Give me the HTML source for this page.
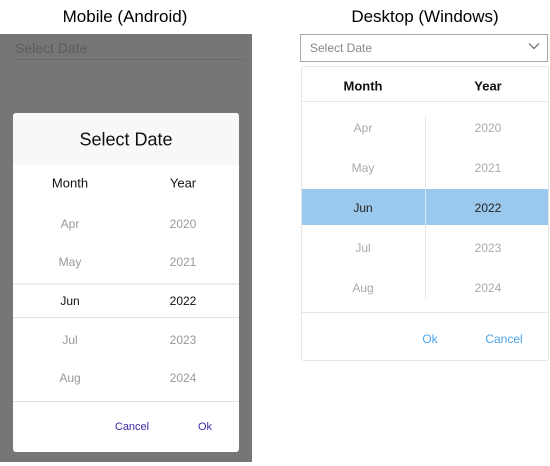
<!DOCTYPE html>
<html><head><style>
*{margin:0;padding:0;box-sizing:border-box}
body{width:550px;height:466px;background:#fff;position:relative;overflow:hidden;font-family:"Liberation Sans",sans-serif}
.a{position:absolute}
.t{position:absolute;white-space:nowrap;transform:translate(-50%,-50%)}
</style></head><body>
<div class="t" style="left:125px;top:17px;font-size:17px;color:#000">Mobile (Android)</div>
<div class="t" style="left:425px;top:17px;font-size:17px;color:#000">Desktop (Windows)</div>

<div class="a" style="left:0;top:34px;width:252px;height:428px;background:#767676"></div>
<div class="a" style="left:15px;top:40px;font-size:14px;color:#5c5c5c">Select Date</div>
<div class="a" style="left:13px;top:59px;width:233px;height:1px;background:#6a6a6a"></div>

<div class="a" style="left:13px;top:113px;width:226px;height:339px;background:#fff;border-radius:3px;overflow:hidden">
  <div class="a" style="left:0;top:0;width:226px;height:52px;background:#f8f8f8"></div>
  <div class="a" style="left:0;top:170px;width:226px;height:2px;background:#eee"></div>
  <div class="a" style="left:0;top:204px;width:226px;height:1px;background:#e2e2e2"></div>
  <div class="a" style="left:0;top:288px;width:226px;height:1px;background:#e2e2e2"></div>
</div>
<div class="t" style="left:126px;top:140px;font-size:18px;color:#111">Select Date</div>
<div class="t" style="left:70px;top:183px;font-size:13px;color:#111">Month</div>
<div class="t" style="left:183px;top:183px;font-size:13px;color:#111">Year</div>
<div class="t" style="left:70px;top:224px;font-size:12px;color:#999">Apr</div>
<div class="t" style="left:183px;top:224px;font-size:12px;color:#999">2020</div>
<div class="t" style="left:70px;top:262px;font-size:12px;color:#999">May</div>
<div class="t" style="left:183px;top:262px;font-size:12px;color:#999">2021</div>
<div class="t" style="left:70px;top:301px;font-size:12px;color:#111">Jun</div>
<div class="t" style="left:183px;top:301px;font-size:12px;color:#111">2022</div>
<div class="t" style="left:70px;top:340px;font-size:12px;color:#999">Jul</div>
<div class="t" style="left:183px;top:340px;font-size:12px;color:#999">2023</div>
<div class="t" style="left:70px;top:378px;font-size:12px;color:#999">Aug</div>
<div class="t" style="left:183px;top:378px;font-size:12px;color:#999">2024</div>
<div class="t" style="left:132px;top:427px;font-size:11px;color:#3f28a8">Cancel</div>
<div class="t" style="left:205px;top:427px;font-size:11px;color:#3f28a8">Ok</div>

<div class="a" style="left:300px;top:34px;width:248px;height:28px;border:1px solid #a8a8a8"></div>
<div class="a" style="left:310px;top:41px;font-size:12px;color:#888">Select Date</div>
<svg class="a" style="left:528px;top:42px" width="12" height="8"><path d="M1 1.5 L6 6.5 L11 1.5" fill="none" stroke="#555" stroke-width="1"/></svg>

<div class="a" style="left:301px;top:66px;width:248px;height:295px;border:1px solid #e6e6e6;border-radius:3px;background:#fff"></div>
<div class="a" style="left:302px;top:101px;width:246px;height:1px;background:#e6e6e6"></div>
<div class="a" style="left:425px;top:115px;width:1px;height:183px;background:#e8e8e8"></div>
<div class="a" style="left:302px;top:189px;width:246px;height:36px;background:#9bc9ee"></div>
<div class="a" style="left:425px;top:189px;width:1px;height:36px;background:#d8e8f5"></div>
<div class="a" style="left:302px;top:312px;width:246px;height:1px;background:#e6e6e6"></div>
<div class="t" style="left:363px;top:86px;font-size:13px;font-weight:bold;color:#111">Month</div>
<div class="t" style="left:488px;top:86px;font-size:13px;font-weight:bold;color:#111">Year</div>
<div class="t" style="left:363px;top:128px;font-size:12px;color:#aaa">Apr</div>
<div class="t" style="left:488px;top:128px;font-size:12px;color:#aaa">2020</div>
<div class="t" style="left:363px;top:168px;font-size:12px;color:#aaa">May</div>
<div class="t" style="left:488px;top:168px;font-size:12px;color:#aaa">2021</div>
<div class="t" style="left:363px;top:208px;font-size:12px;color:#222">Jun</div>
<div class="t" style="left:488px;top:208px;font-size:12px;color:#222">2022</div>
<div class="t" style="left:363px;top:248px;font-size:12px;color:#aaa">Jul</div>
<div class="t" style="left:488px;top:248px;font-size:12px;color:#aaa">2023</div>
<div class="t" style="left:363px;top:288px;font-size:12px;color:#aaa">Aug</div>
<div class="t" style="left:488px;top:288px;font-size:12px;color:#aaa">2024</div>
<div class="t" style="left:430px;top:339px;font-size:12px;color:#4aa3ea">Ok</div>
<div class="t" style="left:504px;top:339px;font-size:12px;color:#4aa3ea">Cancel</div>
</body></html>
